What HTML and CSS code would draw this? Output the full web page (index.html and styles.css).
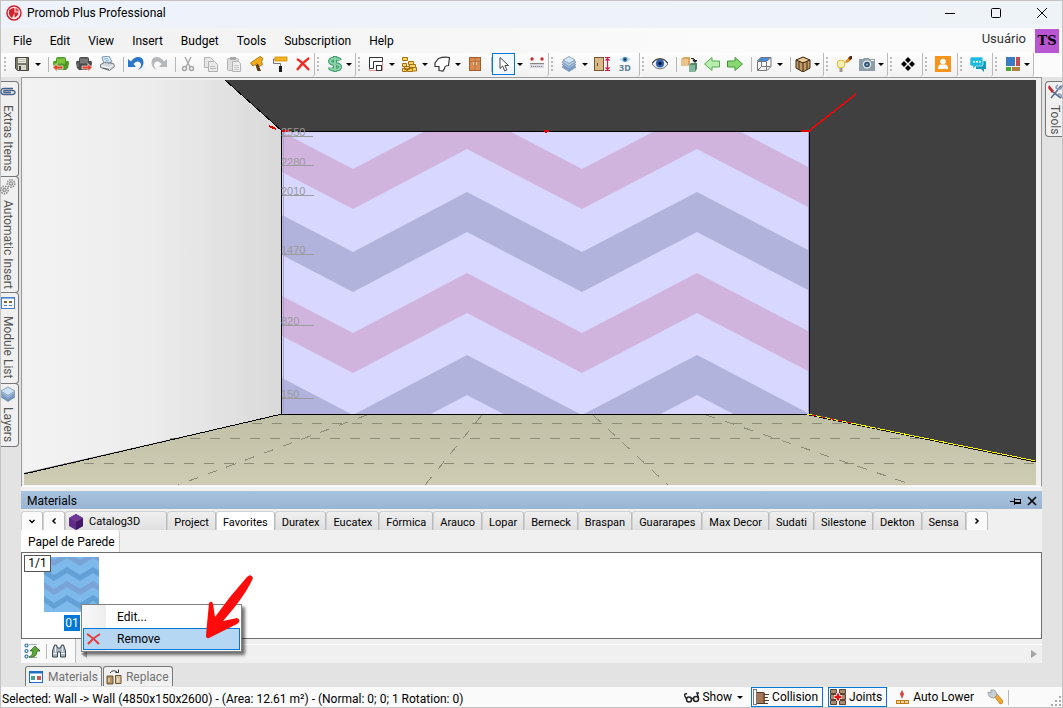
FILE: index.html
```
<!DOCTYPE html>
<html lang="en">

<head>
  <meta charset="UTF-8">
  <meta name="viewport" content="width=device-width, initial-scale=1.0">
  <title>Promob Plus Professional</title>
  <link rel="stylesheet" href="styles.css">
</head>

<body>
  <div class="window">
    <header class="titlebar">
      <svg class="logo" viewBox="0 0 16 16"><circle cx="8" cy="8" r="7" fill="#fbe9ea" stroke="#d4202c" stroke-width="1.5"/><path d="M3 5.500Q5 2.500 8.500 3V7.500H12.500Q12 11 8.500 12.500V8L6 13Q2 10 3 5.500Z" fill="#d4202c"/><path d="M9.500 3Q12.500 3.500 13 6.500H9.500Z" fill="#e04a54"/></svg>
      <h1>Promob Plus Professional</h1>
      <div class="window-buttons">
        <button type="button" aria-label="Minimize"><svg viewBox="0 0 12 12"><path d="M1 6.500h10" stroke="#000"/></svg></button>
        <button type="button" aria-label="Maximize"><svg viewBox="0 0 12 12"><rect x="1.500" y="1.500" width="9" height="9" rx="1" fill="none" stroke="#000"/></svg></button>
        <button type="button" aria-label="Close"><svg viewBox="0 0 12 12"><path d="M1 1l10 10M11 1L1 11" stroke="#000"/></svg></button>
      </div>
    </header>

    <nav class="menubar">
      <button type="button">File</button>
      <button type="button">Edit</button>
      <button type="button">View</button>
      <button type="button">Insert</button>
      <button type="button">Budget</button>
      <button type="button">Tools</button>
      <button type="button">Subscription</button>
      <button type="button">Help</button>
      <span class="user">Usuário</span>
      <span class="avatar">TS</span>
    </nav>

    <div class="toolbar">
      <div class="group tight">
        <i class="grip"></i>
        <button type="button" aria-label="Save"><svg viewBox="0 0 16 16"><path d="M1.500 1.500h13v13h-11l-2-2z" fill="#77776a" stroke="#45453c"/><rect x="4" y="2" width="8" height="5" fill="#e8eadf"/><path d="M4.500 3.500h7M4.500 5.500h7" stroke="#b9bcae"/><rect x="4" y="9" width="8" height="5" fill="#d6d6cf"/><rect x="5" y="10" width="2" height="4" fill="#45453c"/></svg></button>
        <button type="button" class="caret" aria-label="Save options"></button>
        <i class="sep"></i>
        <button type="button" aria-label="Import"><svg viewBox="0 0 16 16"><path d="M3 3q0-2 2-2h6q2 0 2 2v2q3-1 3 2l-1 5-2 2H3l-2-2-1-5q0-3 3-2z" fill="#4f9a26"/><path d="M4 2.500h8v5H4z" fill="#7cc53e"/><path d="M1 7h3v4H1z" fill="#6eb73a"/><path d="M0 11.500l4-4v2.500h6v3H4v2.500z" fill="#e0482e" stroke="#fff" stroke-width=".6"/></svg></button>
        <button type="button" aria-label="Export"><svg viewBox="0 0 16 16"><path d="M3 3q0-2 2-2h6q2 0 2 2v2q3-1 3 2l-1 5-2 2H3l-2-2-1-5q0-3 3-2z" fill="#4a4a4a"/><path d="M4 2.500h8v5H4z" fill="#777"/><path d="M1 7h2v4H1z" fill="#666"/><path d="M16 11.500l-4-4v2.500H6v3h6v2.500z" fill="#e0482e" stroke="#fff" stroke-width=".6"/></svg></button>
        <button type="button" aria-label="Print"><svg viewBox="0 0 16 16"><path d="M3 1l7-1 3 6-8 2z" fill="#d8e9fa" stroke="#7d93b0"/><path d="M5 3l4-.5M6 5l4-.5" stroke="#86b0e0"/><path d="M1.500 8.500l4-2 9 1 1 3-5 4-9-3z" fill="#d2d6da" stroke="#777e86"/><path d="M3 10l7 2 4-3" stroke="#fff" fill="none"/><path d="M4 12l6 1.500" stroke="#5c6268"/></svg></button>
        <i class="sep"></i>
        <button type="button" aria-label="Undo"><svg viewBox="0 0 16 16"><path d="M0 3v8h8L5.500 8Q9 4 12 6.500T10 14Q16 11 15.500 6T10 1Q6 1 3 5.500z" fill="#2a77c9"/></svg></button>
        <button type="button" aria-label="Redo"><svg viewBox="0 0 16 16"><path d="M16 3v8H8l2.500-3Q7 4 4 6.500T6 14Q0 11 .5 6T6 1q4 0 7 4.500z" fill="#b5b8ba"/></svg></button>
        <i class="sep"></i>
        <button type="button" aria-label="Cut"><svg viewBox="0 0 16 16"><path d="M5 1l5 10M11 1L6 11" stroke="#aaa" stroke-width="1.500"/><g fill="none" stroke="#a2a2a2" stroke-width="1.400"><circle cx="4.500" cy="12.500" r="2"/><circle cx="11.500" cy="12.500" r="2"/></g></svg></button>
        <button type="button" aria-label="Copy"><svg viewBox="0 0 16 16"><g fill="#e8e8e8" stroke="#b2b2b2"><path d="M1.500 1.500h6l3 3v7h-9z"/><path d="M5.500 5.500h6l3 3v7h-9z"/></g><path d="M7 10.500h5M7 12.500h6" stroke="#bbb"/></svg></button>
        <button type="button" aria-label="Paste"><svg viewBox="0 0 16 16"><rect x="1.500" y="2.500" width="11" height="12" rx="1" fill="#ddd" stroke="#b5b5b5"/><path d="M4 1h6v3H4z" fill="#aaa"/><path d="M6.500 5.500h6l2 2v8h-8z" fill="#efefef" stroke="#b2b2b2"/><path d="M8 9.500h5M8 11.500h5M8 13.500h5" stroke="#c4c4c4"/></svg></button>
        <button type="button" aria-label="Apply"><svg viewBox="0 0 16 16"><path d="M1.500 7L11 .5l3 2-1.500 3 1 3-3.500 2-2-3-4 2.500z" fill="#f3ab17" stroke="#a66a08" stroke-width=".8"/><path d="M6.500 9l2.500-1 3 7h-3.500z" fill="#5c3511"/></svg></button>
        <button type="button" aria-label="Paint"><svg viewBox="0 0 16 16"><rect x="3" y="1" width="12" height="4" fill="#f5b31b" stroke="#d08f06" stroke-width=".8"/><path d="M3 3H1.500v4.500h7V10" fill="none" stroke="#777"/><rect x="7" y="10" width="3" height="6" fill="#1c1c1c"/></svg></button>
        <button type="button" aria-label="Delete"><svg viewBox="0 0 16 16"><path d="M2 3q5 3 12 11M14 2Q7 7 2 14" stroke="#ee2a23" stroke-width="2.200" fill="none"/></svg></button>
      </div>
      <div class="group">
        <i class="grip"></i>
        <button type="button" aria-label="Budget"><svg viewBox="0 0 16 16"><path d="M8 0v16M13 4.500Q12 2.500 8 2.500T3 5q0 2.500 5 3t5 3-5 2.500T3 11.500" fill="none" stroke="#3c9c6b" stroke-width="4"/><path d="M8 1v14M12.500 4.500Q12 2.500 8 2.500T3 5q0 2.500 5 3t5 3-5 2.500T3 11.500" fill="none" stroke="#8bd3a7" stroke-width="2"/></svg></button>
        <button type="button" class="caret compact" aria-label="Budget options"></button>
      </div>
      <div class="group tight">
        <i class="grip"></i>
        <button type="button" aria-label="Walls"><svg viewBox="0 0 16 16"><path d="M1.500 1.500h13v13h-13z" fill="#fff" stroke="#f08f8f"/><path d="M14.500 1.500H1.500v11h4v-7h9z" fill="#fff" stroke="#333"/><rect x="8.500" y="9.500" width="5" height="5" fill="#fff" stroke="#333"/></svg></button>
        <button type="button" class="caret" aria-label="Wall options"></button>
        <button type="button" aria-label="Bricks"><svg viewBox="0 0 16 16"><g fill="#ffd56a" stroke="#a8700c"><path d="M1.500 1.500h5v3h-5zM1.500 7.500h4v3h-4zM7.500 5.500h5v3h-5zM3.500 10.500h5v3h-5zM8.500 8.500h6v3h-6zM1.500 12.500h4v3h-4zM6.500 12.500h5v3h-5zM11.500 11.500h4v3.500h-4z"/></g></svg></button>
        <button type="button" class="caret" aria-label="Brick options"></button>
        <button type="button" aria-label="Shape"><svg viewBox="0 0 16 16"><path d="M4.500 2.500q5-2 11-1l-1 8q-4 0-4 3l-1.500 2.500-4-.5v-4H1V7z" fill="#fff" stroke="#333" stroke-width="1.200"/></svg></button>
        <button type="button" class="caret" aria-label="Shape options"></button>
        <button type="button" aria-label="Cabinet"><svg viewBox="0 0 16 16"><rect x="2.500" y="1.500" width="11" height="13" fill="#d98a50" stroke="#a35e2b"/><path d="M8 2v12M3 5.500h10" stroke="#b87040"/><path d="M6.500 6v3M9.500 6v3" stroke="#f8d3a9"/></svg></button>
        <i class="sep"></i>
        <button type="button" class="selected" aria-label="Select"><svg viewBox="0 0 16 16"><path d="M4 1.500v11l2.700-2.500 2 5 2.200-1-2-4.500h3.600z" fill="#fff" stroke="#444"/></svg></button>
        <button type="button" class="caret" aria-label="Select options"></button>
        <button type="button" aria-label="Measure"><svg viewBox="0 0 16 16"><circle cx="3" cy="3" r="1.700" fill="#c9302c"/><circle cx="13" cy="3" r="1.700" fill="#c9302c"/><rect x="1" y="7" width="14" height="5" fill="#d7d7e1"/><path d="M1 7.500h14M2 10.500h1m1 0h1m1 0h1m1 0h1m1 0h1m1 0h1" stroke="#888"/></svg></button>
      </div>
      <div class="group">
        <i class="grip"></i>
        <button type="button" aria-label="Layers"><svg viewBox="0 0 16 16"><g stroke="#7390b5" stroke-width=".8"><path d="M1 11l7-4 7 4-7 4.500z" fill="#7d9cc4"/><path d="M1 8.500l7-4 7 4-7 4.500z" fill="#9bb6d8"/><path d="M1 6l7-4 7 4-7 4.500z" fill="#b7d0ea"/><path d="M2 4l6-3.500L14 4 8 7.500z" fill="#d5e6f7"/></g></svg></button>
        <button type="button" class="caret" aria-label="Layer options"></button>
        <button type="button" aria-label="Door height"><svg viewBox="0 0 16 16"><rect x=".5" y="1.500" width="9" height="13" fill="#d9b98a" stroke="#76552c"/><path d="M3.500 7v3" stroke="#6b4a22"/><path d="M11 1.500h5M11 14.500h5M13.500 2v12M11.500 4.500l2-2 2 2M11.500 11.500l2 2 2-2" fill="none" stroke="#d6174d" stroke-width="1.200"/></svg></button>
        <button type="button" aria-label="View 3D"><svg class="view-3d" viewBox="0 0 16 16"><path d="M2 3.500Q8-2 14 3.500 8 8 2 3.500z" fill="#c6dded"/><circle cx="8" cy="3.500" r="2.400" fill="#3d7fae"/><circle cx="8" cy="3.500" r="1" fill="#123"/><text x="2" y="15" class="icon-text">3D</text></svg></button>
      </div>
      <div class="group">
        <i class="grip"></i>
        <button type="button" aria-label="Visibility"><svg viewBox="0 0 16 16"><path d="M0 8q3-5 8-5t8 5q-3 5-8 5T0 8z" fill="#e9edf2" stroke="#555" stroke-width=".8"/><circle cx="8" cy="7.500" r="4" fill="#285ea8"/><circle cx="8" cy="7.500" r="1.700" fill="#0b1733"/><path d="M0 7q3-4.500 8-4.500T16 7" fill="none" stroke="#333"/></svg></button>
        <i class="sep"></i>
        <button type="button" aria-label="Replace"><svg viewBox="0 0 16 16"><path d="M0 3l3-2h6v7l-2 2H0z" fill="#d6a45c"/><path d="M0 3h7v7H0z" fill="#eac48c"/><path d="M8 9l2-2h6v6l-2 3H8z" fill="#4f8a6c"/><path d="M8 9h6v7H8z" fill="#83b79b"/><path d="M10 2.500q3-1 4 2M12 4.500h4l-2 2z" fill="#222" stroke="#222"/></svg></button>
        <button type="button" aria-label="Previous"><svg viewBox="0 0 16 16"><path d="M.5 8L8 1.500v3.500h7.500v6H8v3.500z" fill="#b9ecae" stroke="#53ae49"/></svg></button>
        <button type="button" aria-label="Next"><svg viewBox="0 0 16 16"><path d="M15.500 8L8 1.500v3.500H.5v6H8v3.500z" fill="#8bd872" stroke="#3d9b37"/></svg></button>
        <i class="sep"></i>
        <button type="button" aria-label="Wireframe"><svg viewBox="0 0 16 16"><path d="M1 5l4-4h10l-4 4z" fill="#3f8fe8"/><path d="M1.500 5.500h9v9h-9zM1.500 5L5 1.500h10L11 5M15 1.500v9l-4 4M5.500 1.500v9h9M5.500 10.500l-4 4" fill="none" stroke="#777"/></svg></button>
        <button type="button" class="caret" aria-label="Wireframe options"></button>
        <i class="sep"></i>
        <button type="button" aria-label="Render mode"><svg viewBox="0 0 16 16"><path d="M1 4l7-3 7 3v8l-7 4-7-4z" fill="#c39a63" stroke="#3c2a14"/><path d="M1 4l7 3 7-3M8 7v9M4 5.500v8M12 5.500v8" fill="none" stroke="#3c2a14"/><path d="M3 4l5-2 5 2-5 2z" fill="#ecd0a2"/></svg></button>
        <button type="button" class="caret compact" aria-label="Render mode options"></button>
      </div>
      <div class="group">
        <i class="grip"></i>
        <button type="button" aria-label="Light"><svg viewBox="0 0 16 16"><circle cx="5" cy="8" r="4" fill="#fdf0ac" stroke="#e0b93d"/><path d="M3.500 12h3v4h-3z" fill="#999"/><path d="M9 7l1-3 3-2 2 2-3 2.500z" fill="#e58923"/><path d="M12 2l2-2 2 0v3l-2 1z" fill="#5b2a12"/></svg></button>
        <button type="button" aria-label="Camera"><svg viewBox="0 0 16 16"><path d="M0 3h4l1-1h5v1h6v12H0z" fill="#8c9fa6"/><circle cx="8" cy="8.500" r="4.200" fill="#dfe5e8"/><circle cx="8" cy="8.500" r="2.800" fill="#2f4f73"/><circle cx="8" cy="8.500" r="1" fill="#9cc"/><path d="M12 4.500h3" stroke="#fff"/></svg></button>
        <button type="button" class="caret compact" aria-label="Camera options"></button>
      </div>
      <div class="group">
        <i class="grip"></i>
        <button type="button" aria-label="Pattern"><svg viewBox="0 0 16 16"><path d="M8 1l3 3-3 3-3-3zM8 9l3 3-3 3-3-3zM4 5l3 3-3 3-3-3zM12 5l3 3-3 3-3-3z" fill="#000"/></svg></button>
      </div>
      <div class="group">
        <i class="grip"></i>
        <button type="button" aria-label="Account"><svg viewBox="0 0 16 16"><path d="M0 0h16v16H0z" fill="#f7941d"/><circle cx="8" cy="5.500" r="2.800" fill="#fff"/><path d="M3 13q0-4.500 3-4.500h4q3 0 3 4.500z" fill="#fff"/></svg></button>
      </div>
      <div class="group">
        <i class="grip"></i>
        <button type="button" aria-label="Chat"><svg viewBox="0 0 16 16"><path d="M6 5h9l1 1v7h-2v3l-3-3H6z" fill="#129bb8"/><path d="M1 1h11l1 1v7l-1 1H6l-3 3v-3H1L0 9V2z" fill="#1cbbe0" stroke="#fff" stroke-width=".6"/><path d="M3 5h2v1.500H3zM6 5h2v1.500H6zM9 5h2v1.500H9z" fill="#fff"/></svg></button>
      </div>
      <div class="group">
        <i class="grip"></i>
        <button type="button" aria-label="Layout"><svg viewBox="0 0 16 16"><path d="M1 1h9v9H1z" fill="#3a7cc4"/><path d="M11 1h4v9h-4z" fill="#c0504d"/><path d="M1 11h5v4H1z" fill="#4ea72e"/><path d="M7 11h8v4H7z" fill="#b08340"/></svg></button>
        <button type="button" class="caret compact" aria-label="Layout options"></button>
      </div>
    </div>

    <main class="workspace">
      <aside class="rail left">
        <button type="button"><svg viewBox="0 0 16 16"><path d="M13 4.500H4q-3 0-3 3t3 3h8q3 0 3-2t-3-2H5q-1.500 0-1.500 1t1.500 1h6" fill="none" stroke="#46618c" stroke-width="1.300"/></svg>Extras Items</button>
        <button type="button"><svg viewBox="0 0 16 16"><g fill="none" stroke="#8b8b8b" stroke-dasharray="1.500 1"><circle cx="11" cy="4.500" r="3.700" stroke-width="1.600"/><circle cx="4.500" cy="11" r="3.700" stroke-width="1.600"/></g><g fill="#ddd" stroke="#777"><circle cx="11" cy="4.500" r="1.700"/><circle cx="4.500" cy="11" r="1.700"/></g></svg>Automatic Insert</button>
        <button type="button"><svg viewBox="0 0 16 16"><rect x="1.500" y="2.500" width="13" height="11" fill="#f5f9ff" stroke="#4a7fc6"/><path d="M2 3.500h12" stroke="#8ab1e6"/><path d="M4 6h3v2H4zM9 6h3v2H9z" fill="#7a6a32"/><path d="M4 10.500h3M9 10.500h3" stroke="#4a7fc6"/></svg>Module List</button>
        <button type="button"><svg viewBox="0 0 16 16"><g stroke="#7390b5" stroke-width=".8"><path d="M1 11l7-5 7 5-7 4.500z" fill="#6e90bc"/><path d="M1 9l7-5 7 5-7 4.500z" fill="#8fadd2"/><path d="M1 7l7-5 7 5-7 4.500z" fill="#aac5e2"/><path d="M1 5l7-4 7 4-7 4.500z" fill="#cfe2f5"/></g></svg>Layers</button>
      </aside>

      <div class="center">
        <section class="viewport">
          <!-- room seen from the front: left wall, papered back wall, floor -->
          <svg class="scene" viewBox="24 80 1012 405" preserveAspectRatio="xMidYMin slice">
            <defs>
              <linearGradient id="wallShade"><stop offset="0" stop-color="#f3f3f3"/><stop offset=".5" stop-color="#ececec"/><stop offset="1" stop-color="#d9d9d9"/></linearGradient>
              <linearGradient id="floorShade" x2="0" y2="1"><stop offset="0" stop-color="#c0c0a6"/><stop offset="1" stop-color="#cecdb4"/></linearGradient>
              <clipPath id="backWall"><path d="M282 131h527v283H282z"/></clipPath>
              <path id="zigzag" d="M238 109L353 169L467 109L582 169L697 109L812 169V209L697 149L582 209L467 149L353 209L238 149Z"/>
            </defs>
            <path d="M24 80h1012v405H24z" fill="#404040"/>
            <path d="M24 80h201l57 51v283L24 473z" fill="url(#wallShade)"/>
            <path d="M24 474l258-60h527l227 47v24H24z" fill="url(#floorShade)"/>
            <path d="M282 131h527v283H282z" fill="#d7d7ff"/>
            <g clip-path="url(#backWall)">
              <use href="#zigzag" fill="#d1b4de"/>
              <use href="#zigzag" y="83" fill="#b1b3dc"/>
              <use href="#zigzag" y="164" fill="#d1b4de"/>
              <use href="#zigzag" y="246" fill="#b1b3dc"/>
            </g>
            <g stroke="#8c8c78" stroke-dasharray="10 10" fill="none" shape-rendering="crispEdges">
              <path d="M252 423.500h600M170 438.500h760M64 463.500h972"/>
              <path d="M367 415L178 485M482 415L425 485M593 415L668 485M706 415L913 485"/>
            </g>
            <g fill="none" shape-rendering="crispEdges">
              <path d="M225 80l57 51M282 414L24 474" stroke="#000"/>
              <path d="M283.500 132v281M808.500 132v281" stroke="#a8a2cc"/>
              <path d="M281.500 131.500h528v283h-528z" stroke="#000"/>
              <path d="M809 415l227 47" stroke="#111"/>
              <path d="M807 414l229 47" stroke="#ffff00" stroke-dasharray="8 1"/>
              <path d="M812 415l40 8" stroke="#f00" stroke-dasharray="4 5"/>
              <path d="M809 131l47-37" stroke="#f00" stroke-width="1.500"/>
              <path d="M269 126l7 3M282 131h8M801 131h8M544 131h5M546 130v3" stroke="#e00000" stroke-width="2"/>
              <path d="M282 136.500h31M282 165.500h32M282 195.500h32M282 254.500h32M282 325.500h32M282 398.500h32" stroke="#9c9c9c"/>
            </g>
            <g class="ruler">
              <text x="281" y="136">2550</text>
              <text x="281" y="166">2280</text>
              <text x="281" y="195">2010</text>
              <text x="281" y="254">1470</text>
              <text x="281" y="325">820</text>
              <text x="281" y="398">150</text>
            </g>
          </svg>
        </section>

        <section class="materials">
          <header class="panel-head">
            <h2>Materials</h2>
            <button type="button" aria-label="Pin"><svg viewBox="0 0 12 12"><path d="M1 6.500h4M5.500 3v7M5.500 4.500h6M5.500 7.500h6M5.500 8.500h6M11.500 4v5" stroke="#000" fill="none"/></svg></button>
            <button type="button" aria-label="Close panel"><svg viewBox="0 0 12 12"><path d="M2 2l8 8M10 2l-8 8" stroke="#000" stroke-width="1.600"/></svg></button>
          </header>

          <div class="tabs">
            <button type="button" class="nav" aria-label="List"><svg viewBox="0 0 10 10"><path d="M2.500 4l2.500 2.500 2.500-2.500" fill="none" stroke="#000" stroke-width="1.500"/></svg></button>
            <button type="button" class="nav" aria-label="Back"><svg viewBox="0 0 10 10"><path d="M6.500 2.500L4 5l2.500 2.500" fill="none" stroke="#000" stroke-width="1.500"/></svg></button>
            <button type="button" class="catalog"><svg viewBox="0 0 16 16"><path d="M8 0l7 4v8l-7 4-7-4V4z" fill="#5e2b86"/><path d="M8 8l7-4v8l-7 4z" fill="#42176a"/><path d="M8 0l7 4-7 4-7-4z" fill="#6d3a94"/></svg>Catalog3D</button>
            <button type="button">Project</button>
            <button type="button" class="active">Favorites</button>
            <button type="button">Duratex</button>
            <button type="button">Eucatex</button>
            <button type="button">Fórmica</button>
            <button type="button">Arauco</button>
            <button type="button">Lopar</button>
            <button type="button">Berneck</button>
            <button type="button">Braspan</button>
            <button type="button">Guararapes</button>
            <button type="button">Max Decor</button>
            <button type="button">Sudati</button>
            <button type="button">Silestone</button>
            <button type="button">Dekton</button>
            <button type="button">Sensa</button>
            <button type="button" class="nav" aria-label="Forward"><svg viewBox="0 0 10 10"><path d="M3.500 2.500L6 5 3.500 7.500" fill="none" stroke="#000" stroke-width="1.500"/></svg></button>
          </div>
          <div class="subtabs"><button type="button">Papel de Parede</button></div>

          <div class="list">
            <figure class="material">
              <svg viewBox="0 0 55 55">
                <path d="M0 0h55v55H0z" fill="#7db9ea"/>
                <g fill="none" stroke-width="5">
                  <path d="M-2 -2l12 8 13-8 13 8 13-8 13 8M-2 27l12 8 13-8 13 8 13-8 13 8" stroke="#7aa3d8"/>
                  <path d="M-2 13l12 8 13-8 13 8 13-8 13 8M-2 41l12 8 13-8 13 8 13-8 13 8" stroke="#62a0d6"/>
                </g>
              </svg>
              <figcaption>01</figcaption>
            </figure>
            <span class="count">1/1</span>
            <div class="context-menu" role="menu">
              <button type="button" role="menuitem">Edit...</button>
              <button type="button" role="menuitem" class="hover"><svg viewBox="0 0 16 16"><path d="M1 3q5 3 12 10M14 3Q7 7 2 13" stroke="#e63b3b" stroke-width="2" fill="none"/></svg>Remove</button>
            </div>
            <svg class="pointer" viewBox="0 0 52 68"><path d="M44 3Q48-1 50 4 45 16 31 34L20 47 34 44Q39 46 34 50L6 64Q3 65 3 61L6 29Q9 26 10 30L12 43 27 23Z" fill="#fe0b0b"/></svg>
          </div>

          <div class="list-foot">
            <div class="list-tools">
              <button type="button" aria-label="Sort"><svg viewBox="0 0 16 16"><g fill="#fff" stroke="#2f6ea8" stroke-width="1.200"><circle cx="2.500" cy="2.500" r="1.500"/><circle cx="2.500" cy="8" r="1.500"/><circle cx="2.500" cy="13.500" r="1.500"/></g><path d="M5 1.500h8M5 14.500h8" stroke="#aaa"/><path d="M5 14q4-1 4-6H6l5-5 5 5h-3q0 7-8 6z" fill="#5fa83b" stroke="#2e6b1c" stroke-width=".8"/></svg></button>
              <i class="sep"></i>
              <button type="button" aria-label="Find"><svg viewBox="0 0 16 16"><path d="M1.500 8l2-6h2l1 3h3l1-3h2l2 6v6h-5V9h-3v5h-5z" fill="#a9b4c0" stroke="#3b4756"/><path d="M2 10.500h4M10 10.500h4M4.500 3v6M11.500 3v6" stroke="#f1f4f8"/></svg></button>
            </div>
            <div class="scroll"><i class="arrow-left"></i><i class="arrow-right"></i></div>
          </div>

          <div class="dock-tabs">
            <button type="button"><svg viewBox="0 0 16 16"><rect x="1.500" y="2.500" width="13" height="11" fill="#fff" stroke="#1c6fc4"/><path d="M1 3.500h14" stroke="#1c6fc4" stroke-width="2"/><path d="M3 7h4v4H3z" fill="#49a08c"/><path d="M9 7h4v4H9z" fill="#cf5555"/></svg>Materials</button>
            <button type="button"><svg viewBox="0 0 16 16"><path d="M1 7h6v8H1z" fill="#b5915f" stroke="#6d5433"/><path d="M9.500 6.500h5.500v8H9.500z" fill="#d4bd99" stroke="#6d5433"/><path d="M3 9v4M12 9v4" stroke="#fff0d5"/><path d="M4 4q3-4 7-1M9.500 3.500h3v-3" fill="none" stroke="#333"/></svg>Replace</button>
          </div>
        </section>
      </div>

      <aside class="rail right">
        <button type="button"><svg viewBox="0 0 16 16"><path d="M2 1l5 6-2 2-4-5z" fill="#c22b35"/><path d="M6 8l8 6M14 2L4 14" stroke="#5b6f8e" stroke-width="1.600"/><path d="M15 1q0 5-4 4t0-4M11 10q4 0 4 4" fill="none" stroke="#8ea0bd" stroke-width="1.600"/></svg>Tools</button>
      </aside>
    </main>

    <footer class="status">
      <p>Selected: Wall -&gt; Wall (4850x150x2600) - (Area: 12.61 m²) - (Normal: 0; 0; 1 Rotation: 0)</p>
      <button type="button" class="show"><svg viewBox="0 0 16 16"><g fill="none" stroke="#222" stroke-width="1.500"><circle cx="5" cy="10.500" r="2.500"/><circle cx="12" cy="10" r="2.500"/><path d="M2.500 10L0 5.500l3-1M14.500 9L13 4l2 0M7 9.500h3"/></g></svg>Show<i class="triangle"></i></button>
      <button type="button" class="on"><svg viewBox="0 0 16 16"><rect x=".5" y=".5" width="3" height="15" fill="#fff" stroke="#777"/><path d="M4 4h8v10H4z" fill="#a87555"/><path d="M4 3.500h7v11H4M11 5.500h5M11 8.500h4M11 11.500h5M11 14.500h4" fill="none" stroke="#4e3b2c"/></svg>Collision</button>
      <button type="button" class="on"><svg viewBox="0 0 16 16"><g fill="#aa8b72" stroke="#5a4130"><path d="M.5.500h6v4h-6zM9.500.500h6v4h-6zM.5 5.500h6v5h-6zM9.500 5.500h6v5h-6zM.5 11.500h6v4h-6zM9.500 11.500h6v4h-6z"/></g><path d="M8 4v8M4 8h8" stroke="#fff" stroke-width="4"/><path d="M8 4.500v7M4.500 8h7" stroke="#e41212" stroke-width="2.500"/></svg>Joints</button>
      <button type="button" class="lower"><svg viewBox="0 0 16 16"><path d="M8 1l2 4-2 5-2-5z" fill="#d8413c"/><rect x="2.500" y="11.500" width="12" height="3" fill="#f4d48c" stroke="#b97c1d"/><path d="M6.500 12v2M10.500 12v2" stroke="#b97c1d"/></svg>Auto Lower</button>
      <button type="button" class="wrench" aria-label="Settings"><svg viewBox="0 0 16 16"><path d="M7 7l3-2 6 7q0 3-3 3z" fill="#f0a72e" stroke="#b7730b" stroke-width=".6"/><path d="M1 3l3 1V1q4-1 5 2l1 3-3 3Q1 9 1 3z" fill="#c7ced4" stroke="#858d94" stroke-width=".7"/></svg></button>
      <i class="sep"></i>
      <svg class="resize" viewBox="0 0 11 11"><path d="M8 0h2v2H8zM8 4h2v2H8zM8 8h2v2H8zM4 4h2v2H4zM4 8h2v2H4zM0 8h2v2H0z" fill="#aaa"/></svg>
    </footer>
  </div>
</body>

</html>
```
FILE: styles.css
```
* {
  box-sizing: border-box;
}

body {
  margin: 0;
  font-family: Roboto, "Noto Sans", sans-serif;
  font-size: 12px;
  line-height: 16px;
  color: #000;
}

button {
  display: flex;
  align-items: center;
  margin: 0;
  padding: 0;
  border: 0;
  background: none;
  font: inherit;
  color: inherit;
  white-space: nowrap;
}

svg {
  display: block;
  flex: none;
  width: 16px;
  height: 16px;
}

h1,
h2,
p,
figure {
  margin: 0;
  font-size: 12px;
  font-weight: 400;
}

.window {
  display: flex;
  flex-direction: column;
  height: 100vh;
  border: 1px solid #c3c3c3;
  background: #f0f0f0;
}

/* title and menu */
.titlebar {
  display: flex;
  align-items: center;
  flex: none;
  height: 27px;
  padding: 0 14px 4px 5px;
  background: linear-gradient(90deg, #eef2fb, #edf3f7);
}

.titlebar h1 {
  margin-left: 5px;
}

.window-buttons {
  display: flex;
  gap: 34px;
  margin-left: auto;
}

.window-buttons svg {
  width: 12px;
  height: 12px;
}

.menubar {
  display: flex;
  align-items: center;
  flex: none;
  gap: 18px;
  height: 25px;
  padding: 0 3px 0 12px;
  background: linear-gradient(90deg, #f0f0f0, #fbfbfb 70%);
}

.user {
  margin-left: auto;
  margin-right: -9px;
  padding-bottom: 3px;
  color: #333;
  font-size: 13px;
}

.avatar {
  width: 24px;
  height: 24px;
  background: #b855d3;
  font: bold 13px/24px "DejaVu Serif", serif;
  text-align: center;
}

/* toolbar */
.toolbar {
  display: flex;
  flex: none;
  height: 24px;
  padding-left: 1px;
  background: #fbfbfb;
}

.group {
  display: flex;
  align-items: center;
  padding: 0 3px 2px 0;
  border-right: 1px solid #bbb;
  border-radius: 0 0 3px 3px;
  background: linear-gradient(#fdfdfd, #f1f1f1);
}

.group.tight {
  padding-right: 0;
}

.group button {
  justify-content: center;
  width: 23px;
  height: 22px;
}

.group .selected {
  border: 1px solid #0078d7;
  background: #f3f9ff;
}

.grip {
  width: 8px;
  height: 14px;
  background: repeating-linear-gradient(#bbb 0 2px, transparent 2px 4px) 2px 0 / 2px 14px no-repeat;
}

.sep {
  flex: none;
  width: 6px;
  height: 15px;
  border-right: 1px solid #b8b8b8;
}

.group .caret {
  width: 10px;
}

.group .caret.compact {
  width: 6px;
}

.caret::before,
.triangle {
  content: "";
  border: 3px solid transparent;
  border-top-color: #000;
  border-bottom: 0;
}

.view-3d {
  overflow: visible;
}

.icon-text {
  font: bold 9px "Noto Sans", sans-serif;
  fill: #5b7f9c;
}

/* work area */
.workspace {
  display: flex;
  flex: 1;
  min-height: 0;
  background: #e3e3e3;
}

.rail {
  display: flex;
  flex-direction: column;
  flex: none;
  width: 20px;
  padding-top: 4px;
}

.rail button {
  gap: 5px;
  width: 18px;
  padding: 2px 3px 4px 0;
  border: 1px solid #777;
  border-left: 0;
  border-radius: 0 4px 4px 0;
  background: #f0f0f0;
  color: #555;
  writing-mode: vertical-rl;
}

.rail button + button {
  margin-top: -1px;
}

.rail.right {
  padding-left: 3px;
}

.rail.right button {
  width: 17px;
  padding: 2px 0 2px 1px;
  border: 1px solid #777;
  border-right: 0;
  border-radius: 4px 0 0 4px;
}

.center {
  display: flex;
  flex: 1;
  flex-direction: column;
  min-width: 0;
}

.viewport {
  flex: 1;
  min-height: 0;
  padding: 2px 5px 1px 2px;
  border: 1px solid #999;
  border-bottom: 1px solid #fff;
  background: #f0f0f0;
}

.scene {
  width: 100%;
  height: 100%;
}

.ruler {
  font: 11px "Liberation Sans", sans-serif;
  fill: #9a9a9a;
}

/* materials panel */
.materials {
  flex: none;
  padding-top: 4px;
  background: #f0f0f0;
}

.panel-head {
  display: flex;
  align-items: center;
  gap: 5px;
  height: 18px;
  padding: 2px 4px 0 6px;
  background: linear-gradient(#a8c3de, #9ab4d3);
}

.panel-head h2 {
  flex: 1;
}

.panel-head svg {
  width: 12px;
  height: 12px;
}

.tabs {
  display: flex;
  height: 21px;
  padding-top: 2px;
}

.tabs button {
  flex: none;
  padding: 4px 6px 0;
  border: 1px solid #d0d0d0;
  border-bottom: 0;
  border-right-color: #bbb;
  border-radius: 3px 3px 0 0;
  background: linear-gradient(#efefef, #e0e0e0);
  font-size: 11px;
}

.tabs .nav {
  justify-content: center;
  width: 22px;
  padding: 0;
  background: #fafafa;
}

.tabs .nav svg {
  width: 10px;
  height: 10px;
}

.tabs .catalog {
  gap: 5px;
  padding: 2px 26px 0 2px;
}

.tabs .active {
  background: #fff;
}

.subtabs button {
  height: 22px;
  padding: 2px 4px 0 7px;
  border-right: 1px solid #ccc;
  border-radius: 3px 3px 0 0;
  background: #fff;
}

.list {
  position: relative;
  height: 87px;
  border: 1px solid #6d6d6d;
  background: #fff;
}

.material {
  width: 56px;
  margin: 4px 0 0 22px;
}

.material svg {
  width: 55px;
  height: 55px;
}

.material figcaption {
  width: 16px;
  height: 16px;
  margin: 3px auto 0;
  background: #0078d7;
  color: #fff;
  text-align: center;
}

.count {
  position: absolute;
  top: 2px;
  left: 2px;
  width: 27px;
  height: 17px;
  border: 1px solid #555;
  background: #fff;
  line-height: 14px;
  text-align: center;
}

.context-menu {
  position: absolute;
  top: 51px;
  left: 59px;
  width: 161px;
  padding: 1px;
  border: 1px solid #808080;
  background: linear-gradient(90deg, #f8f8f8, #eee 24px, #fff 24px);
  box-shadow: 3px 3px 3px rgba(0, 0, 0, .55);
}

.context-menu button {
  width: 100%;
  height: 22px;
  padding-left: 34px;
}

.context-menu .hover {
  gap: 15px;
  padding-left: 2px;
  border: 1px solid #0078d7;
  background: #b5d7f3;
}

.pointer {
  position: absolute;
  top: 21px;
  left: 181px;
  width: 52px;
  height: 68px;
}

.list-foot {
  display: flex;
  height: 24px;
}

.list-tools {
  display: flex;
  align-items: center;
  gap: 4px;
  width: 55px;
  padding-left: 3px;
  border-right: 1px solid #bbb;
  background: #fafafa;
}

.list-tools .sep {
  margin-left: -3px;
}

.scroll {
  display: flex;
  flex: 1;
  align-items: center;
  justify-content: space-between;
  margin: 5px 0 0 5px;
  padding: 0 5px 0 0;
  border-top: 1px solid #fff;
}

.arrow-left,
.arrow-right {
  border: 4px solid transparent;
  border-left: 0;
  border-right: 6px solid #a5a5a5;
}

.arrow-right {
  border-right: 0;
  border-left: 6px solid #a5a5a5;
}

.dock-tabs {
  display: flex;
  gap: 1px;
  height: 24px;
  padding: 3px 0 1px 4px;
  background: #e3e3e3;
}

.dock-tabs button {
  gap: 4px;
  padding: 0 3px 0 2px;
  border: 1px solid #777;
  border-bottom: 0;
  border-radius: 3px 3px 0 0;
  background: #f0f0f0;
  color: #707070;
}

/* status bar */
.status {
  display: flex;
  align-items: center;
  flex: none;
  height: 20px;
  background: #fafafa;
}

.status p {
  flex: 1;
  padding: 3px 0 0 1px;
  white-space: nowrap;
}

.status button {
  gap: 3px;
  height: 20px;
}

.status .show {
  gap: 2px;
  margin-right: 8px;
}

.status .triangle {
  margin-left: 3px;
}

.status .on {
  margin-right: 5px;
  padding: 0 4px 0 1px;
  border: 1px solid #0078d7;
}

.status .lower {
  margin: 0 13px 0 2px;
}

.resize {
  align-self: flex-end;
  width: 11px;
  height: 11px;
  margin-left: 42px;
}
```
